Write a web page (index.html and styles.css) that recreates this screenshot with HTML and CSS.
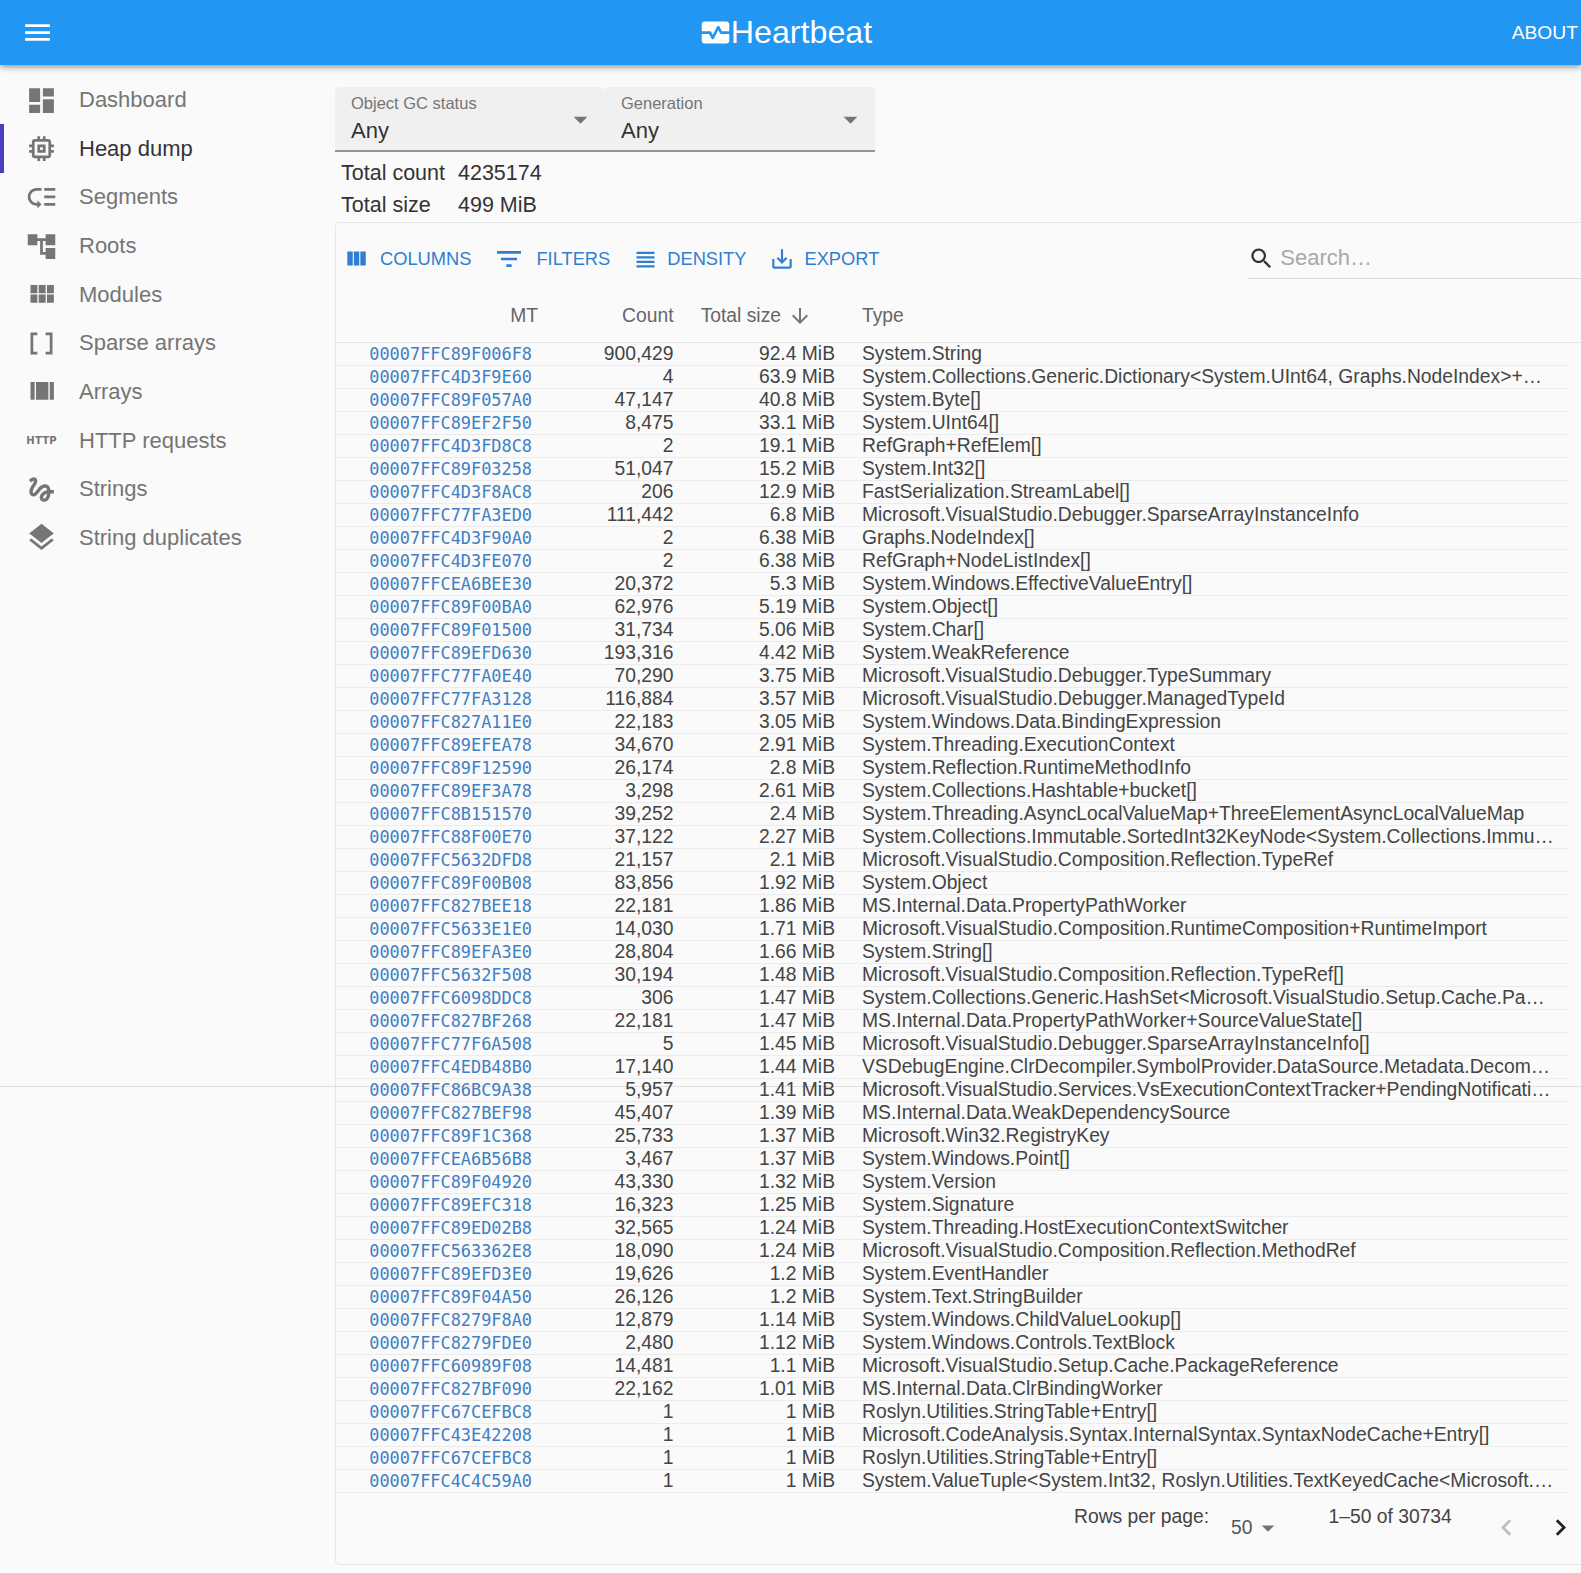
FILE: index.html
```html
<!DOCTYPE html>
<html lang="en">

<head>
    <meta charset="UTF-8">
    <title>Heartbeat</title>
    <link rel="stylesheet" href="styles.css">
</head>

<body>

    <header class="appbar">
        <svg class="menu-icon" viewBox="0 0 24 24"><path d="M3 18h18v-2H3v2zm0-5h18v-2H3v2zm0-7v2h18V6H3z"/></svg>
        <div class="brand">
            <svg class="brand-icon" viewBox="0 0 24 24"><path d="M15.11 12.45L14 10.24l-3.11 6.21c-.17.34-.51.55-.89.55s-.72-.21-.89-.55L7.38 13H2v5c0 1.1.9 2 2 2h16c1.1 0 2-.9 2-2v-5h-6c-.38 0-.72-.21-.89-.55z"/><path d="M20 4H4c-1.1 0-2 .9-2 2v5h6c.38 0 .72.21.89.55L10 13.76l3.11-6.21c.34-.68 1.45-.68 1.79 0L16.62 11H22V6c0-1.1-.9-2-2-2z"/></svg>
            <span>Heartbeat</span>
        </div>
        <a class="about">ABOUT</a>
    </header>

    <div class="layout">
        <nav class="sidebar">
            <a class="nav-item">
                <span class="nav-icon"><svg viewBox="0 0 24 24"><path d="M3 13h8V3H3v10zm0 8h8v-6H3v6zm10 0h8V11h-8v10zm0-18v6h8V3h-8z"/></svg></span>
                Dashboard
            </a>
            <a class="nav-item active">
                <span class="nav-icon"><svg viewBox="0 0 24 24"><path d="M15 9H9v6h6V9zm-2 4h-2v-2h2v2zm8-2V9h-2V7c0-1.1-.9-2-2-2h-2V3h-2v2h-2V3H9v2H7c-1.1 0-2 .9-2 2v2H3v2h2v2H3v2h2v2c0 1.1.9 2 2 2h2v2h2v-2h2v2h2v-2h2c1.1 0 2-.9 2-2v-2h2v-2h-2v-2h2zm-4 6H7V7h10v10z"/></svg></span>
                Heap dump
            </a>
            <a class="nav-item">
                <span class="nav-icon"><svg viewBox="0 0 24 24"><path d="M14 5h8v2h-8zm0 5.5h8v2h-8zm0 5.5h8v2h-8zM2 11.5C2 15.08 4.92 18 8.5 18H9v2l3-3-3-3v2h-.5C6.02 16 4 13.98 4 11.5S6.02 7 8.5 7H12V5H8.5C4.92 5 2 7.92 2 11.5z"/></svg></span>
                Segments
            </a>
            <a class="nav-item">
                <span class="nav-icon"><svg viewBox="0 0 24 24"><path d="M22 11V3h-7v3H9V3H2v8h7V8h2v10h4v3h7v-8h-7v3h-2V8h2v3z"/></svg></span>
                Roots
            </a>
            <a class="nav-item">
                <span class="nav-icon"><svg viewBox="0 0 24 24"><path d="M4 11h5V5H4v6zm0 7h5v-6H4v6zm6 0h5v-6h-5v6zm6 0h5v-6h-5v6zm-6-7h5V5h-5v6zm6-6v6h5V5h-5z"/></svg></span>
                Modules
            </a>
            <a class="nav-item">
                <span class="nav-icon"><svg viewBox="0 0 24 24"><path d="M15 4v2h3v12h-3v2h5V4zM4 20h5v-2H6V6h3V4H4z"/></svg></span>
                Sparse arrays
            </a>
            <a class="nav-item">
                <span class="nav-icon"><svg viewBox="0 0 24 24"><path d="M4 18h3V5H4v13zM18 5v13h3V5h-3zM8 18h9V5H8v13z"/></svg></span>
                Arrays
            </a>
            <a class="nav-item">
                <span class="nav-icon"><span class="http-mark">HTTP</span></span>
                HTTP requests
            </a>
            <a class="nav-item">
                <span class="nav-icon"><svg viewBox="0 0 24 24"><path d="M4.59 6.89c.7-.71 1.4-1.35 1.71-1.22.5.2 0 1.03-.3 1.52-.25.42-2.86 3.89-2.86 6.31 0 1.28.48 2.34 1.34 2.98.75.56 1.74.73 2.64.46 1.07-.31 1.95-1.4 3.06-2.77 1.21-1.49 2.83-3.44 4.08-3.44 1.63 0 1.65 1.01 1.76 1.79-3.78.64-5.38 3.67-5.38 5.37 0 1.7 1.44 3.09 3.21 3.09 1.63 0 4.29-1.33 4.69-6.1H21v-2.5h-2.47c-.15-1.65-1.09-4.2-4.03-4.2-2.25 0-4.18 1.91-4.94 2.84-.58.73-2.06 2.48-2.29 2.72-.25.3-.68.84-1.11.84-.45 0-.72-.83-.36-1.92.35-1.09 1.4-2.86 1.85-3.52.78-1.14 1.3-1.92 1.3-3.28C8.95 3.69 7.31 3 6.44 3 5.12 3 3.97 4 3.72 4.25c-.36.36-.66.66-.88.93l1.75 1.71zm9.29 11.66c-.31 0-.74-.26-.74-.72 0-.6.73-2.2 2.87-2.76-.3 2.69-1.43 3.48-2.13 3.48z"/></svg></span>
                Strings
            </a>
            <a class="nav-item">
                <span class="nav-icon"><svg viewBox="0 0 24 24"><path d="M11.99 18.54l-7.37-5.73L3 14.07l9 7 9-7-1.63-1.27-7.38 5.74zM12 16l7.36-5.73L21 9l-9-7-9 7 1.63 1.27L12 16z"/></svg></span>
                String duplicates
            </a>
        </nav>

        <main class="content">
            <div class="filters">
                <div class="select">
                    <label>Object GC status</label>
                    <div class="select-value">Any</div>
                    <svg class="select-caret" viewBox="0 0 24 24"><path d="M7 10l5 5 5-5z"/></svg>
                </div>
                <div class="select">
                    <label>Generation</label>
                    <div class="select-value">Any</div>
                    <svg class="select-caret" viewBox="0 0 24 24"><path d="M7 10l5 5 5-5z"/></svg>
                </div>
            </div>

            <div class="totals">
                <span>Total count</span><span>4235174</span>
                <span>Total size</span><span>499 MiB</span>
            </div>

            <section class="card">
                <div class="toolbar">
                    <a class="tool tool-columns"><svg viewBox="0 0 24 24"><path d="M10 18h5V5h-5v13zm-6 0h5V5H4v13zM16 5v13h5V5h-5z"/></svg>COLUMNS</a>
                    <a class="tool tool-filters"><svg viewBox="0 0 24 24"><path d="M10 18h4v-2h-4v2zM3 6v2h18V6H3zm3 7h12v-2H6v2z"/></svg>FILTERS</a>
                    <a class="tool tool-density"><svg viewBox="0 0 24 24"><path d="M4 15h16v-2H4v2zm0 4h16v-2H4v2zm0-8h16V9H4v2zm0-6v2h16V5H4z"/></svg>DENSITY</a>
                    <a class="tool tool-export"><svg viewBox="0 0 24 24"><path d="M19 12v7H5v-7H3v7c0 1.1.9 2 2 2h14c1.1 0 2-.9 2-2v-7h-2zm-6 .67l2.59-2.58L17 11.5l-5 5-5-5 1.41-1.41L11 12.67V3h2z"/></svg>EXPORT</a>
                    <div class="search">
                        <svg viewBox="0 0 24 24"><path d="M15.5 14h-.79l-.28-.27C15.41 12.59 16 11.11 16 9.5 16 5.91 13.09 3 9.5 3S3 5.91 3 9.5 5.91 16 9.5 16c1.61 0 3.09-.59 4.23-1.57l.27.28v.79l5 4.99L20.49 19l-4.99-5zm-6 0C7.01 14 5 11.99 5 9.5S7.01 5 9.5 5 14 7.01 14 9.5 11.99 14 9.5 14z"/></svg>
                        <span>Search…</span>
                    </div>
                </div>

                <div class="grid-head">
                    <span class="num head-mt">MT</span>
                    <span class="num">Count</span>
                    <span class="num sorted">Total size <svg viewBox="0 0 24 24"><path d="M20 12l-1.41-1.41L13 16.17V4h-2v12.17l-5.58-5.59L4 12l8 8 8-8z"/></svg></span>
                    <span class="type">Type</span>
                </div>

                <div class="grid-body">
                    <div class="row"><a class="mt">00007FFC89F006F8</a><span class="num">900,429</span><span class="num">92.4 MiB</span><span class="type">System.String</span></div>
                    <div class="row"><a class="mt">00007FFC4D3F9E60</a><span class="num">4</span><span class="num">63.9 MiB</span><span class="type">System.Collections.Generic.Dictionary&lt;System.UInt64, Graphs.NodeIndex&gt;+Entry[]</span></div>
                    <div class="row"><a class="mt">00007FFC89F057A0</a><span class="num">47,147</span><span class="num">40.8 MiB</span><span class="type">System.Byte[]</span></div>
                    <div class="row"><a class="mt">00007FFC89EF2F50</a><span class="num">8,475</span><span class="num">33.1 MiB</span><span class="type">System.UInt64[]</span></div>
                    <div class="row"><a class="mt">00007FFC4D3FD8C8</a><span class="num">2</span><span class="num">19.1 MiB</span><span class="type">RefGraph+RefElem[]</span></div>
                    <div class="row"><a class="mt">00007FFC89F03258</a><span class="num">51,047</span><span class="num">15.2 MiB</span><span class="type">System.Int32[]</span></div>
                    <div class="row"><a class="mt">00007FFC4D3F8AC8</a><span class="num">206</span><span class="num">12.9 MiB</span><span class="type">FastSerialization.StreamLabel[]</span></div>
                    <div class="row"><a class="mt">00007FFC77FA3ED0</a><span class="num">111,442</span><span class="num">6.8 MiB</span><span class="type">Microsoft.VisualStudio.Debugger.SparseArrayInstanceInfo</span></div>
                    <div class="row"><a class="mt">00007FFC4D3F90A0</a><span class="num">2</span><span class="num">6.38 MiB</span><span class="type">Graphs.NodeIndex[]</span></div>
                    <div class="row"><a class="mt">00007FFC4D3FE070</a><span class="num">2</span><span class="num">6.38 MiB</span><span class="type">RefGraph+NodeListIndex[]</span></div>
                    <div class="row"><a class="mt">00007FFCEA6BEE30</a><span class="num">20,372</span><span class="num">5.3 MiB</span><span class="type">System.Windows.EffectiveValueEntry[]</span></div>
                    <div class="row"><a class="mt">00007FFC89F00BA0</a><span class="num">62,976</span><span class="num">5.19 MiB</span><span class="type">System.Object[]</span></div>
                    <div class="row"><a class="mt">00007FFC89F01500</a><span class="num">31,734</span><span class="num">5.06 MiB</span><span class="type">System.Char[]</span></div>
                    <div class="row"><a class="mt">00007FFC89EFD630</a><span class="num">193,316</span><span class="num">4.42 MiB</span><span class="type">System.WeakReference</span></div>
                    <div class="row"><a class="mt">00007FFC77FA0E40</a><span class="num">70,290</span><span class="num">3.75 MiB</span><span class="type">Microsoft.VisualStudio.Debugger.TypeSummary</span></div>
                    <div class="row"><a class="mt">00007FFC77FA3128</a><span class="num">116,884</span><span class="num">3.57 MiB</span><span class="type">Microsoft.VisualStudio.Debugger.ManagedTypeId</span></div>
                    <div class="row"><a class="mt">00007FFC827A11E0</a><span class="num">22,183</span><span class="num">3.05 MiB</span><span class="type">System.Windows.Data.BindingExpression</span></div>
                    <div class="row"><a class="mt">00007FFC89EFEA78</a><span class="num">34,670</span><span class="num">2.91 MiB</span><span class="type">System.Threading.ExecutionContext</span></div>
                    <div class="row"><a class="mt">00007FFC89F12590</a><span class="num">26,174</span><span class="num">2.8 MiB</span><span class="type">System.Reflection.RuntimeMethodInfo</span></div>
                    <div class="row"><a class="mt">00007FFC89EF3A78</a><span class="num">3,298</span><span class="num">2.61 MiB</span><span class="type">System.Collections.Hashtable+bucket[]</span></div>
                    <div class="row"><a class="mt">00007FFC8B151570</a><span class="num">39,252</span><span class="num">2.4 MiB</span><span class="type">System.Threading.AsyncLocalValueMap+ThreeElementAsyncLocalValueMap</span></div>
                    <div class="row"><a class="mt">00007FFC88F00E70</a><span class="num">37,122</span><span class="num">2.27 MiB</span><span class="type">System.Collections.Immutable.SortedInt32KeyNode&lt;System.Collections.Immutable.ImmutableHashSet]</span></div>
                    <div class="row"><a class="mt">00007FFC5632DFD8</a><span class="num">21,157</span><span class="num">2.1 MiB</span><span class="type">Microsoft.VisualStudio.Composition.Reflection.TypeRef</span></div>
                    <div class="row"><a class="mt">00007FFC89F00B08</a><span class="num">83,856</span><span class="num">1.92 MiB</span><span class="type">System.Object</span></div>
                    <div class="row"><a class="mt">00007FFC827BEE18</a><span class="num">22,181</span><span class="num">1.86 MiB</span><span class="type">MS.Internal.Data.PropertyPathWorker</span></div>
                    <div class="row"><a class="mt">00007FFC5633E1E0</a><span class="num">14,030</span><span class="num">1.71 MiB</span><span class="type">Microsoft.VisualStudio.Composition.RuntimeComposition+RuntimeImport</span></div>
                    <div class="row"><a class="mt">00007FFC89EFA3E0</a><span class="num">28,804</span><span class="num">1.66 MiB</span><span class="type">System.String[]</span></div>
                    <div class="row"><a class="mt">00007FFC5632F508</a><span class="num">30,194</span><span class="num">1.48 MiB</span><span class="type">Microsoft.VisualStudio.Composition.Reflection.TypeRef[]</span></div>
                    <div class="row"><a class="mt">00007FFC6098DDC8</a><span class="num">306</span><span class="num">1.47 MiB</span><span class="type">System.Collections.Generic.HashSet&lt;Microsoft.VisualStudio.Setup.Cache.PackageReference&gt;</span></div>
                    <div class="row"><a class="mt">00007FFC827BF268</a><span class="num">22,181</span><span class="num">1.47 MiB</span><span class="type">MS.Internal.Data.PropertyPathWorker+SourceValueState[]</span></div>
                    <div class="row"><a class="mt">00007FFC77F6A508</a><span class="num">5</span><span class="num">1.45 MiB</span><span class="type">Microsoft.VisualStudio.Debugger.SparseArrayInstanceInfo[]</span></div>
                    <div class="row"><a class="mt">00007FFC4EDB48B0</a><span class="num">17,140</span><span class="num">1.44 MiB</span><span class="type">VSDebugEngine.ClrDecompiler.SymbolProvider.DataSource.Metadata.DecompilerSymbols</span></div>
                    <div class="row"><a class="mt">00007FFC86BC9A38</a><span class="num">5,957</span><span class="num">1.41 MiB</span><span class="type">Microsoft.VisualStudio.Services.VsExecutionContextTracker+PendingNotifications</span></div>
                    <div class="row"><a class="mt">00007FFC827BEF98</a><span class="num">45,407</span><span class="num">1.39 MiB</span><span class="type">MS.Internal.Data.WeakDependencySource</span></div>
                    <div class="row"><a class="mt">00007FFC89F1C368</a><span class="num">25,733</span><span class="num">1.37 MiB</span><span class="type">Microsoft.Win32.RegistryKey</span></div>
                    <div class="row"><a class="mt">00007FFCEA6B56B8</a><span class="num">3,467</span><span class="num">1.37 MiB</span><span class="type">System.Windows.Point[]</span></div>
                    <div class="row"><a class="mt">00007FFC89F04920</a><span class="num">43,330</span><span class="num">1.32 MiB</span><span class="type">System.Version</span></div>
                    <div class="row"><a class="mt">00007FFC89EFC318</a><span class="num">16,323</span><span class="num">1.25 MiB</span><span class="type">System.Signature</span></div>
                    <div class="row"><a class="mt">00007FFC89ED02B8</a><span class="num">32,565</span><span class="num">1.24 MiB</span><span class="type">System.Threading.HostExecutionContextSwitcher</span></div>
                    <div class="row"><a class="mt">00007FFC563362E8</a><span class="num">18,090</span><span class="num">1.24 MiB</span><span class="type">Microsoft.VisualStudio.Composition.Reflection.MethodRef</span></div>
                    <div class="row"><a class="mt">00007FFC89EFD3E0</a><span class="num">19,626</span><span class="num">1.2 MiB</span><span class="type">System.EventHandler</span></div>
                    <div class="row"><a class="mt">00007FFC89F04A50</a><span class="num">26,126</span><span class="num">1.2 MiB</span><span class="type">System.Text.StringBuilder</span></div>
                    <div class="row"><a class="mt">00007FFC8279F8A0</a><span class="num">12,879</span><span class="num">1.14 MiB</span><span class="type">System.Windows.ChildValueLookup[]</span></div>
                    <div class="row"><a class="mt">00007FFC8279FDE0</a><span class="num">2,480</span><span class="num">1.12 MiB</span><span class="type">System.Windows.Controls.TextBlock</span></div>
                    <div class="row"><a class="mt">00007FFC60989F08</a><span class="num">14,481</span><span class="num">1.1 MiB</span><span class="type">Microsoft.VisualStudio.Setup.Cache.PackageReference</span></div>
                    <div class="row"><a class="mt">00007FFC827BF090</a><span class="num">22,162</span><span class="num">1.01 MiB</span><span class="type">MS.Internal.Data.ClrBindingWorker</span></div>
                    <div class="row"><a class="mt">00007FFC67CEFBC8</a><span class="num">1</span><span class="num">1 MiB</span><span class="type">Roslyn.Utilities.StringTable+Entry[]</span></div>
                    <div class="row"><a class="mt">00007FFC43E42208</a><span class="num">1</span><span class="num">1 MiB</span><span class="type">Microsoft.CodeAnalysis.Syntax.InternalSyntax.SyntaxNodeCache+Entry[]</span></div>
                    <div class="row"><a class="mt">00007FFC67CEFBC8</a><span class="num">1</span><span class="num">1 MiB</span><span class="type">Roslyn.Utilities.StringTable+Entry[]</span></div>
                    <div class="row"><a class="mt">00007FFC4C4C59A0</a><span class="num">1</span><span class="num">1 MiB</span><span class="type">System.ValueTuple&lt;System.Int32, Roslyn.Utilities.TextKeyedCache&lt;Microsoft.CodeAnalysis.Syntax&gt;&gt;</span></div>
                </div>

                <div class="pager">
                    <span class="pager-label">Rows per page:</span>
                    <span class="pager-size">50 <svg viewBox="0 0 24 24"><path d="M7 10l5 5 5-5z"/></svg></span>
                    <span class="pager-range">1–50 of 30734</span>
                    <svg class="pager-prev" viewBox="0 0 24 24"><path d="M15.41 7.41L14 6l-6 6 6 6 1.41-1.41L10.83 12z"/></svg>
                    <svg class="pager-next" viewBox="0 0 24 24"><path d="M10 6L8.59 7.41 13.17 12l-4.58 4.59L10 18l6-6z"/></svg>
                </div>
            </section>
        </main>
    </div>

    <div class="fold-line"></div>

</body>

</html>
```

FILE: styles.css
```css
html,
body {
    height: 100%;
}

body {
    margin: 0;
    overflow: hidden;
    position: relative;
    font-family: "Liberation Sans", Arial, sans-serif;
    background-color: #fafafa;
    color: #333;
}

svg {
    fill: currentColor;
    display: block;
    flex-shrink: 0;
}

/* top bar */

.appbar {
    position: relative;
    z-index: 2;
    height: 65px;
    display: grid;
    grid-template-columns: 1fr auto 1fr;
    align-items: center;
    background-color: #2196f3;
    color: #fff;
    box-shadow: 0 2px 4px -1px rgba(0, 0, 0, 0.2), 0 4px 5px 0 rgba(0, 0, 0, 0.14), 0 1px 10px 0 rgba(0, 0, 0, 0.12);
}

.menu-icon {
    width: 33px;
    height: 33px;
    margin-left: 21px;
}

.brand {
    display: flex;
    align-items: center;
    font-size: 32.2px;
    margin-left: -10px;
}

.brand-icon {
    width: 33px;
    height: 33px;
    margin-right: -1px;
}

.about {
    justify-self: end;
    font-size: 19.25px;
    padding-right: 3px;
}

/* sidebar */

.layout {
    display: flex;
}

.sidebar {
    width: 335px;
    flex-shrink: 0;
    padding-top: 10.8px;
}

.nav-item {
    height: 48.65px;
    display: flex;
    align-items: center;
    font-size: 22px;
    color: #757575;
    box-sizing: border-box;
    border-left: 4px solid transparent;
}

.nav-item.active {
    color: #333;
    border-left-color: #4b3cc4;
}

.nav-icon {
    width: 33px;
    height: 33px;
    margin-left: 21px;
    margin-right: 21px;
    display: flex;
    align-items: center;
    justify-content: center;
    color: #757575;
}

.nav-icon svg {
    width: 33px;
    height: 33px;
}

.http-mark {
    font-family: "DejaVu Sans", sans-serif;
    font-size: 10px;
    font-weight: 700;
    letter-spacing: 0.2px;
}

/* filters */

.content {
    flex: 1;
    min-width: 0;
    padding-top: 22px;
}

.filters {
    display: flex;
    width: 540px;
    height: 65px;
}

.select {
    position: relative;
    flex: 1;
    box-sizing: border-box;
    padding: 6px 16px 0;
    background-color: #f0f0f0;
    border-radius: 5px 5px 0 0;
    border-bottom: 2px solid #949494;
}

.select label {
    display: block;
    font-size: 16.5px;
    line-height: 20px;
    color: #757575;
}

.select-value {
    font-size: 22px;
    line-height: 30px;
    margin-top: 3px;
    color: #333;
}

.select-caret {
    position: absolute;
    right: 8px;
    top: 16px;
    width: 33px;
    height: 33px;
    color: #757575;
}

.totals {
    display: grid;
    grid-template-columns: 117px auto;
    justify-content: start;
    padding-left: 6px;
    font-size: 21.5px;
    line-height: 32px;
    height: 64px;
    margin-top: 5px;
    color: #333;
}

/* data grid */

.card {
    margin-top: 1px;
    margin-right: -20px;
    height: 1343px;
    border: 1px solid #e6e6e6;
    border-radius: 5px;
    box-sizing: border-box;
}

.toolbar {
    height: 72px;
    display: flex;
    align-items: center;
}

.tool {
    display: flex;
    align-items: center;
    font-size: 18.3px;
    color: #2f7fd0;
}

.tool svg {
    width: 26px;
    height: 26px;
}

.tool-columns {
    margin-left: 7px;
    gap: 11px;
}

.tool-filters {
    margin-left: 22px;
    gap: 11px;
}

.tool-filters svg {
    width: 32px;
    height: 32px;
}

.tool-density {
    margin-left: 22px;
    gap: 8px;
}

.tool-density svg {
    width: 27px;
    height: 27px;
}

.tool-export {
    margin-left: 23px;
    gap: 9px;
}

.search {
    margin-left: 369px;
    width: 360px;
    height: 41px;
    box-sizing: border-box;
    margin-top: -1px;
    display: flex;
    align-items: center;
    gap: 5px;
    font-size: 22px;
    color: #a8a8a8;
    border-bottom: 1px solid #dcdcdc;
}

.search svg {
    width: 27px;
    height: 27px;
    color: #333;
}

.grid-head,
.row {
    display: grid;
    grid-template-columns: 196px 141.5px 161.5px minmax(0, 1fr);
}

.grid-head {
    height: 48px;
    padding-bottom: 5px;
    box-sizing: border-box;
    align-items: center;
    font-size: 19.3px;
    color: #666;
    border-bottom: 1px solid #e4e4e4;
}

.head-mt {
    margin-right: -6px;
}

.sorted {
    display: flex;
    align-items: center;
    justify-content: flex-end;
    gap: 7px;
    margin-right: 23px;
}

.sorted svg {
    width: 24px;
    height: 24px;
    color: #757575;
}

.grid-body {
    width: 1233px;
}

.row {
    height: 23px;
    box-sizing: border-box;
    align-items: center;
    font-size: 19.3px;
    line-height: 22px;
    color: #444;
    border-bottom: 1px solid #ececec;
}

.num {
    text-align: right;
}

.type {
    margin-left: 27px;
    margin-right: 14.8px;
    white-space: nowrap;
    overflow: hidden;
    text-overflow: ellipsis;
}

.mt {
    font-family: "DejaVu Sans Mono", monospace;
    font-size: 16.9px;
    text-align: right;
    color: #3f7fc4;
}

/* pager */

.pager {
    height: 70px;
    font-size: 19.3px;
    color: #444;
    display: flex;
    align-items: flex-start;
}

.pager-label {
    margin-left: 738px;
    margin-top: 13px;
}

.pager-size {
    display: flex;
    align-items: center;
    margin-left: 22px;
    margin-top: 20px;
    color: #555;
}

.pager-size svg {
    width: 30px;
    height: 30px;
    color: #757575;
}

.pager-range {
    margin-left: 46px;
    margin-top: 13px;
}

.pager-prev,
.pager-next {
    width: 33px;
    height: 33px;
    margin-top: 18px;
}

.pager-prev {
    margin-left: 38px;
    color: #bdbdbd;
}

.pager-next {
    margin-left: 21px;
    color: #222;
}

/* faint line across the page, it lies over the sidebar and the rows */

.fold-line {
    position: absolute;
    left: 0;
    right: 0;
    top: 1086px;
    height: 1px;
    background-color: rgba(0, 0, 0, 0.1);
}
```
